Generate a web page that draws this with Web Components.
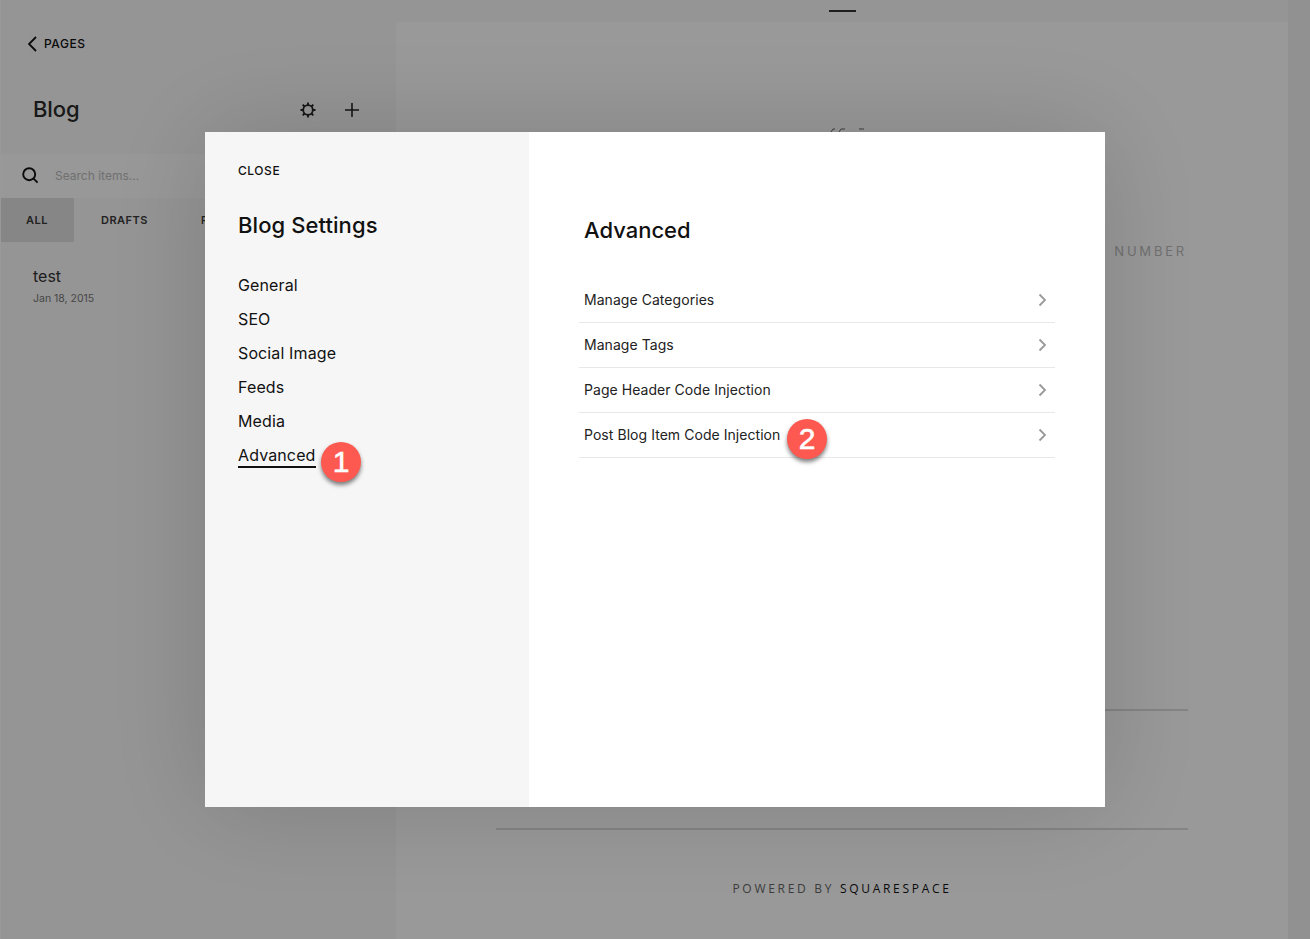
<!DOCTYPE html>
<html>
<head>
<meta charset="utf-8">
<title>Blog Settings</title>
<style>
  html, body { margin: 0; height: 100%; }
  body { font-family: Inter, "Liberation Sans", sans-serif; overflow: hidden; }
</style>
</head>
<body>
<blog-editor>
  <pages-panel slot="panel"></pages-panel>
  <site-preview slot="preview"></site-preview>
</blog-editor>
<settings-modal>
  <settings-nav slot="nav"></settings-nav>
  <advanced-pane slot="content"></advanced-pane>
</settings-modal>

<script>
class BlogEditor extends HTMLElement {
    constructor() {
        super();
        this.attachShadow({ mode: 'open' });
        this.shadowRoot.innerHTML = `
            <style>
                :host {
                    display: grid;
                    grid-template-columns: 396px 892px;
                    height: 939px;
                    background: #f2f2f2;
                    overflow: hidden;
                }
            </style>
            <slot name="panel"></slot>
            <slot name="preview"></slot>
        `;
    }
}

class PagesPanel extends HTMLElement {
    constructor() {
        super();
        this.attachShadow({ mode: 'open' });
        this.shadowRoot.innerHTML = `
            <style>
                :host { display: block; color: #111; border-left: 1px solid #fff; background: #f8f8f8; }
                .back {
                    display: flex; align-items: center; gap: 5px;
                    padding: 35px 0 0 27px; height: 17px;
                    font-size: 12px; font-weight: 500; letter-spacing: .55px;
                }
                .title {
                    display: flex; align-items: center; justify-content: space-between;
                    padding: 0 36px 0 32px; margin-top: 37px; height: 40px;
                }
                h1 { margin: 0; font-size: 22px; font-weight: 500; color: #2a2a2a; letter-spacing: -.1px; }
                .tools { display: flex; align-items: center; gap: 28px; margin-top: 2px; }
                svg { display: block; }
                .search {
                    display: flex; align-items: center; gap: 16px;
                    margin-top: 25px; height: 42px; padding: 0 0 2px 20px;
                    background: #fdfdfd; font-size: 12px; color: #bbb;
                }
                .tabs {
                    display: flex; height: 44px;
                    font-size: 11px; font-weight: 600; letter-spacing: .5px; color: #3a3a3a;
                }
                .tabs div { display: flex; align-items: center; flex: none; }
                .tabs .on { width: 73px; padding-left: 25px; box-sizing: border-box; background: #e0e0e0; }
                .tabs .off { margin-left: 27px; }
                .tabs .off + .off { margin-left: 53px; font-size: 10.5px; letter-spacing: 0; }
                .item { padding: 24px 0 0 32px; }
                .name { font-size: 16px; color: #333; line-height: 20px; }
                .date { font-size: 10.5px; color: #777; line-height: 14px; margin-top: 6px; }
            </style>
            <div class="back">
                <svg width="11" height="16" viewBox="0 0 11 16" fill="none" stroke="#111" stroke-width="1.8"><path d="M8 1 1 8l7 7"/></svg>
                <span>PAGES</span>
            </div>
            <div class="title">
                <h1>Blog</h1>
                <div class="tools">
                    <svg width="16" height="16" viewBox="0 0 16 16" fill="none" stroke="#222" stroke-width="1.8">
                        <circle cx="8" cy="8" r="4.8"/>
                        <path d="M8 .5v2.5M8 13v2.5M.5 8H3M13 8h2.5M2.7 2.7l1.8 1.8M11.5 11.5l1.8 1.8M13.3 2.7l-1.8 1.8M4.5 11.5l-1.8 1.8"/>
                    </svg>
                    <svg width="16" height="16" viewBox="0 0 16 16" fill="none" stroke="#222" stroke-width="1.6"><path d="M8 1v14M1 8h14"/></svg>
                </div>
            </div>
            <div class="search">
                <svg width="18" height="18" viewBox="0 0 18 18" fill="none" stroke="#111" stroke-width="1.9"><circle cx="8.2" cy="8.2" r="6"/><path d="m12.6 12.6 4 4"/></svg>
                <span>Search items...</span>
            </div>
            <div class="tabs">
                <div class="on">ALL</div>
                <div class="off">DRAFTS</div>
                <div class="off">READY</div>
            </div>
            <div class="item">
                <div class="name">test</div>
                <div class="date">Jan 18, 2015</div>
            </div>
        `;
    }
}

class SitePreview extends HTMLElement {
    constructor() {
        super();
        this.attachShadow({ mode: 'open' });
        this.shadowRoot.innerHTML = `
            <style>
                :host { display: flex; flex-direction: column; background: #f8f8f8; }
                .top { display: flex; justify-content: center; flex: none; height: 22px; }
                .handle { width: 27px; height: 2px; margin-top: 10px; background: #333; }
                .content {
                    display: flex; flex-direction: column; flex: 1;
                    padding: 0 100px; box-sizing: border-box; background: #fff;
                }
                .logo { display: block; margin: 106px 0 0 334px; }
                .number {
                    align-self: flex-end; margin: 111px 1px 0 0;
                    font-size: 13px; letter-spacing: 2.8px; color: #bbb; line-height: 16px;
                }
                hr { width: 100%; margin: 0; border: 0; height: 2px; background: #dcdcdc; flex: none; }
                .rule-a { margin-top: 450px; }
                .rule-b { margin-top: 117px; }
                .powered {
                    margin-top: 51px; text-align: center; font-family: "Open Sans", sans-serif;
                    font-size: 12px; letter-spacing: 2.7px; color: #666; line-height: 16px;
                }
                .powered b { font-weight: 400; color: #111; }
            </style>
            <div class="top"><div class="handle"></div></div>
            <div class="content">
                <svg class="logo" width="36" height="4" viewBox="0 0 36 4" fill="none" stroke="#666" stroke-width="1"><path d="M1 4 3 1h2M9 4l2-3h4M29 1h5"/></svg>
                <div class="number">NUMBER</div>
                <hr class="rule-a">
                <hr class="rule-b">
                <div class="powered">POWERED BY <b>SQUARESPACE</b></div>
            </div>
        `;
    }
}

class SettingsModal extends HTMLElement {
    constructor() {
        super();
        this.attachShadow({ mode: 'open' });
        this.shadowRoot.innerHTML = `
            <style>
                :host {
                    position: fixed; inset: 0; display: flex;
                    padding: 132px 0 0 205px; box-sizing: border-box;
                    align-items: flex-start;
                    background: rgba(0, 0, 0, .4);
                }
                .box {
                    display: grid; grid-template-columns: 324px 576px;
                    width: 900px; height: 675px;
                    box-shadow: 0 0 100px rgba(0, 0, 0, .16);
                }
            </style>
            <div class="box">
                <slot name="nav"></slot>
                <slot name="content"></slot>
            </div>
        `;
    }
}

class NumberBadge extends HTMLElement {
    constructor() {
        super();
        this.attachShadow({ mode: 'open' });
        this.shadowRoot.innerHTML = `
            <style>
                :host {
                    position: absolute; width: 40px; height: 40px; border-radius: 50%;
                    display: flex; align-items: center; justify-content: center;
                    background: #fe5950; color: #fff;
                    font: 30px/40px "Liberation Sans", sans-serif;
                    -webkit-text-stroke: .6px #fff;
                    box-shadow: 0 3px 4px rgba(0, 0, 0, .5);
                }
            </style>
            <slot></slot>
        `;
    }
}

class SettingsNav extends HTMLElement {
    constructor() {
        super();
        this.attachShadow({ mode: 'open' });
        this.shadowRoot.innerHTML = `
            <style>
                :host { display: block; position: relative; background: #f6f6f6; color: #111; padding: 32px 33px 0; }
                .close { font-size: 12px; font-weight: 500; letter-spacing: .55px; line-height: 14px; }
                h2 { margin: 32px 0 0; font-size: 22px; font-weight: 500; line-height: 30px; letter-spacing: .08px; }
                nav { display: flex; flex-direction: column; align-items: flex-start; gap: 8px; margin-top: 32px; }
                nav a { font-size: 16px; font-weight: 420; line-height: 26px; color: #111; letter-spacing: .12px; }
                nav a.on { line-height: 20px; margin-top: 3px; padding-bottom: 1px; border-bottom: 2px solid #111; }
                number-badge { left: 116px; top: 310px; }
            </style>
            <div class="close">CLOSE</div>
            <h2>Blog Settings</h2>
            <nav>
                <a>General</a>
                <a>SEO</a>
                <a>Social Image</a>
                <a>Feeds</a>
                <a>Media</a>
                <a class="on">Advanced</a>
            </nav>
            <number-badge>1</number-badge>
        `;
    }
}

class SettingsRow extends HTMLElement {
    constructor() {
        super();
        this.attachShadow({ mode: 'open' });
        this.shadowRoot.innerHTML = `
            <style>
                :host {
                    display: flex; align-items: center; justify-content: space-between;
                    height: 42px; padding: 0 8px 2px 5px;
                    border-bottom: 1px solid #e8e8e8;
                    font-size: 14px; color: #222; letter-spacing: .05px;
                }
                svg { display: block; margin-top: 2px; }
            </style>
            <slot></slot>
            <svg width="9" height="14" viewBox="0 0 9 14" fill="none" stroke="#999" stroke-width="1.8"><path d="m1.5 1.5 5.5 5.5-5.5 5.5"/></svg>
        `;
    }
}

class AdvancedPane extends HTMLElement {
    constructor() {
        super();
        this.attachShadow({ mode: 'open' });
        this.shadowRoot.innerHTML = `
            <style>
                :host { display: block; position: relative; background: #fff; color: #111; padding: 82px 50px 0; }
                h2 { margin: 0 0 0 5px; font-size: 22px; font-weight: 500; line-height: 32px; }
                .rows { margin-top: 32px; }
                number-badge { left: 258px; top: 287px; }
            </style>
            <h2>Advanced</h2>
            <div class="rows">
                <settings-row>Manage Categories</settings-row>
                <settings-row>Manage Tags</settings-row>
                <settings-row>Page Header Code Injection</settings-row>
                <settings-row>Post Blog Item Code Injection</settings-row>
            </div>
            <number-badge>2</number-badge>
        `;
    }
}

customElements.define('blog-editor', BlogEditor);
customElements.define('pages-panel', PagesPanel);
customElements.define('site-preview', SitePreview);
customElements.define('settings-modal', SettingsModal);
customElements.define('number-badge', NumberBadge);
customElements.define('settings-nav', SettingsNav);
customElements.define('settings-row', SettingsRow);
customElements.define('advanced-pane', AdvancedPane);
</script>
</body>
</html>
